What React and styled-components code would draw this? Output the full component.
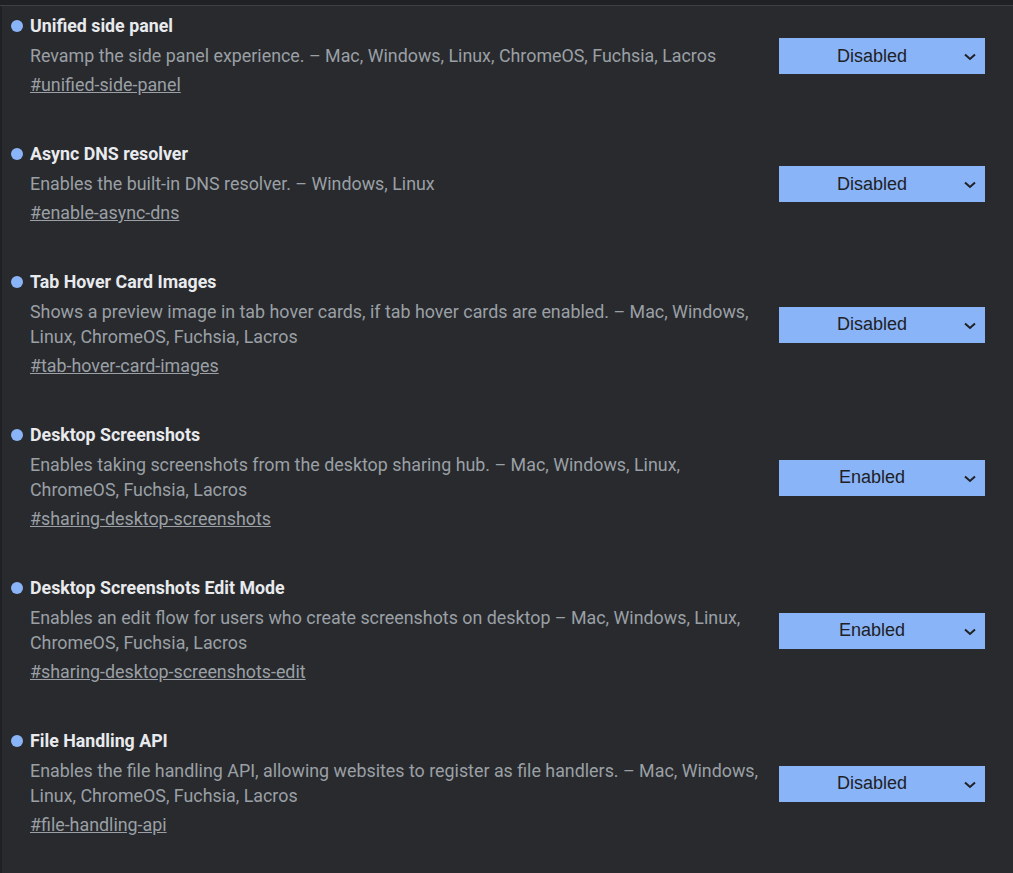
import styled, { createGlobalStyle } from 'styled-components';

const GlobalStyle = createGlobalStyle`
  body {
    margin: 0;
    background: #292a2d;
    font-family: Roboto, "Noto Sans", sans-serif;
  }
`;

const Page = styled.div`
  min-height: 873px;
  background: #292a2d;
  border-left: 2px solid #202124;
`;

const TopStrip = styled.div`
  height: 5px;
  background: #202124;
  border-bottom: 1px solid #3c4043;
  margin-left: -2px;
`;

const List = styled.div`
  display: flex;
  flex-direction: column;
`;

const Entry = styled.div`
  display: flex;
  align-items: center;
  gap: 20px;
  padding: 10px 28px 36px 9px;
`;

const Info = styled.div`
  flex: 1;
  display: flex;
  flex-direction: column;
  min-width: 0;
`;

const TitleRow = styled.div`
  display: flex;
  align-items: center;
  gap: 7px;
  height: 20px;
`;

const Dot = styled.span`
  width: 12px;
  height: 12px;
  border-radius: 50%;
  background: #8ab4f8;
  flex-shrink: 0;
`;

const Title = styled.h2`
  margin: 0;
  font-size: 17.8px;
  font-weight: 700;
  color: #e8eaed;
  line-height: 20px;
`;

const Desc = styled.p`
  margin: 7px 0 0 19px;
  font-size: 17.85px;
  line-height: 25px;
  color: #9aa0a6;
`;

const Link = styled.a`
  margin: 4px 0 0 19px;
  font-size: 17.85px;
  line-height: 26px;
  color: #9aa0a6;
  text-decoration: underline;
  align-self: flex-start;
`;

const SelectBox = styled.div`
  position: relative;
  width: 206px;
  height: 36px;
  flex-shrink: 0;
  margin-bottom: 2px;
  background: #8ab4f8;
  display: flex;
  align-items: center;
  justify-content: center;
  padding-right: 20px;
  box-sizing: border-box;
  font-family: "Liberation Sans", Arial, sans-serif;
  font-size: 18px;
  color: #202124;
`;

const Chevron = styled.svg`
  position: absolute;
  right: 8px;
  top: 15px;
`;

const flags = [
  {
    title: 'Unified side panel',
    desc: 'Revamp the side panel experience. – Mac, Windows, Linux, ChromeOS, Fuchsia, Lacros',
    id: 'unified-side-panel',
    value: 'Disabled',
  },
  {
    title: 'Async DNS resolver',
    desc: 'Enables the built-in DNS resolver. – Windows, Linux',
    id: 'enable-async-dns',
    value: 'Disabled',
  },
  {
    title: 'Tab Hover Card Images',
    desc: 'Shows a preview image in tab hover cards, if tab hover cards are enabled. – Mac, Windows, Linux, ChromeOS, Fuchsia, Lacros',
    id: 'tab-hover-card-images',
    value: 'Disabled',
  },
  {
    title: 'Desktop Screenshots',
    desc: 'Enables taking screenshots from the desktop sharing hub. – Mac, Windows, Linux, ChromeOS, Fuchsia, Lacros',
    id: 'sharing-desktop-screenshots',
    value: 'Enabled',
  },
  {
    title: 'Desktop Screenshots Edit Mode',
    desc: 'Enables an edit flow for users who create screenshots on desktop – Mac, Windows, Linux, ChromeOS, Fuchsia, Lacros',
    id: 'sharing-desktop-screenshots-edit',
    value: 'Enabled',
  },
  {
    title: 'File Handling API',
    desc: 'Enables the file handling API, allowing websites to register as file handlers. – Mac, Windows, Linux, ChromeOS, Fuchsia, Lacros',
    id: 'file-handling-api',
    value: 'Disabled',
  },
];

const App = () => {
  return (
    <>
      <GlobalStyle />
      <Page>
        <TopStrip />
        <List>
          {flags.map((f) => (
            <Entry key={f.id}>
              <Info>
                <TitleRow>
                  <Dot />
                  <Title>{f.title}</Title>
                </TitleRow>
                <Desc>{f.desc}</Desc>
                <Link href={'#' + f.id}>#{f.id}</Link>
              </Info>
              <SelectBox>
                {f.value}
                <Chevron width='14' height='8' viewBox='0 0 14 8'>
                  <path d='M2 1.5 L7 6 L12 1.5' fill='none' stroke='#202124' strokeWidth='2' />
                </Chevron>
              </SelectBox>
            </Entry>
          ))}
        </List>
      </Page>
    </>
  );
};

export default App;
